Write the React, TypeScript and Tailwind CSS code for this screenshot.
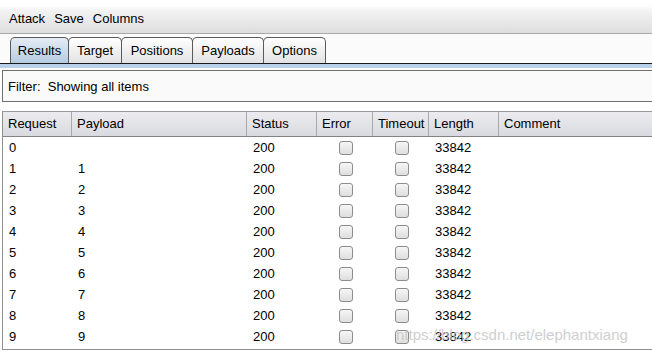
import React from "react";

const cols = [
  { name: "Request", w: 69 },
  { name: "Payload", w: 175 },
  { name: "Status", w: 70 },
  { name: "Error", w: 56 },
  { name: "Timeout", w: 56 },
  { name: "Length", w: 70 },
  { name: "Comment", w: 160 },
];

const tabs = [
  { name: "Results", w: 59 },
  { name: "Target", w: 53 },
  { name: "Positions", w: 71 },
  { name: "Payloads", w: 71 },
  { name: "Options", w: 62 },
];

function Checkbox() {
  return (
    <div className="w-[14px] h-[14px] rounded-[3px] border border-[#8c8c8c] bg-[linear-gradient(to_bottom,#f6f6f6,#dedede)]" />
  );
}

export default function App() {
  const rows = Array.from({ length: 10 }, (_, i) => i);
  return (
    <div
      className="relative w-[652px] h-[353px] overflow-hidden bg-white text-black text-[13px] leading-none"
      style={{ fontFamily: '"Liberation Sans", Arial, sans-serif' }}
    >
      {/* menu bar */}
      <div className="h-[34px] flex items-end pb-[8px] pl-[9px] gap-[9px] border-b border-[#a8a8a8] bg-[linear-gradient(to_bottom,#ffffff_0px,#ffffff_6px,#f3f3f3_10px,#dedede_33px)]">
        <span>Attack</span>
        <span>Save</span>
        <span>Columns</span>
      </div>
      {/* tabs */}
      <div className="h-[29px] flex items-end pl-[10px] bg-[#fbfbfb]">
        {tabs.map((t, i) => (
          <div
            key={t.name}
            className={
              "h-[26px] flex items-center justify-center border border-b-0 border-[#5a5a5a] rounded-t-[5px] " +
              (i > 0 ? "-ml-px " : "") +
              (i === 0
                ? "bg-[linear-gradient(to_bottom,#e4edf6,#b4cbe2)]"
                : "bg-[linear-gradient(to_bottom,#ffffff,#e2e2e4)]")
            }
            style={{ width: t.w + (i > 0 ? 1 : 0) }}
          >
            {t.name}
          </div>
        ))}
      </div>
      <div className="h-px bg-[#1a1a1a]" />
      <div className="h-[4px] bg-[#b9d0e8]" />
      <div className="h-[2px] bg-[#fbfbfb]" />
      {/* filter */}
      <div className="ml-[2px] h-[32px] border border-r-0 border-[#6e6e6e] bg-[#fafafa] flex items-center pl-[5px]">
        Filter:&nbsp; Showing all items
      </div>
      <div className="h-[9px] bg-white" />
      {/* table */}
      <div className="ml-[2px] h-[239px] border-l border-b border-[#8e8e8e] bg-white">
        <div className="h-[26px] flex border-t border-b border-t-[#9a9aa2] border-b-[#828282] bg-[linear-gradient(to_bottom,#ececf0,#d9dadf)]">
          {cols.map((c, i) => (
            <div
              key={c.name}
              className={
                "flex items-center pl-[5px] pb-[2px] shrink-0 " +
                (i < cols.length - 1 ? "border-r border-[#a8a8ae]" : "")
              }
              style={{ width: c.w }}
            >
              {c.name}
            </div>
          ))}
        </div>
        {rows.map((r) => (
          <div key={r} className="h-[21px] flex items-center">
            <div className="w-[69px] pl-[6px] shrink-0">{r}</div>
            <div className="w-[175px] pl-[6px] shrink-0">{r === 0 ? "" : r}</div>
            <div className="w-[70px] pl-[6px] shrink-0">200</div>
            <div className="w-[56px] flex justify-center shrink-0 pl-[2px]">
              <Checkbox />
            </div>
            <div className="w-[56px] flex justify-center shrink-0 pl-[2px]">
              <Checkbox />
            </div>
            <div className="w-[70px] pl-[6px] shrink-0">33842</div>
          </div>
        ))}
      </div>
      <div className="absolute left-[396px] top-[327px] text-[15px] text-[#c4c4c4] opacity-80 pointer-events-none">
        https://blog.csdn.net/elephantxiang
      </div>
    </div>
  );
}
